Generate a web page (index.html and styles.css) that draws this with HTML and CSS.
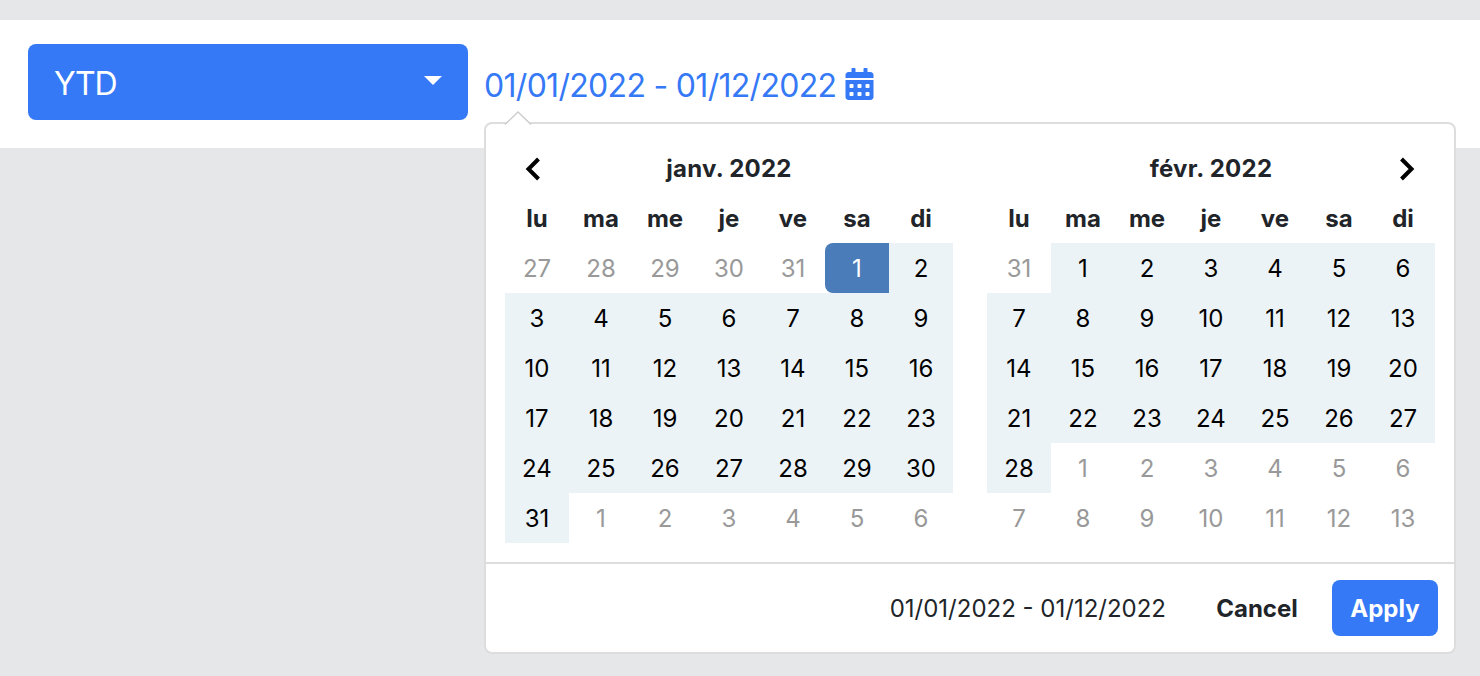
FILE: index.html
```html
<!DOCTYPE html>
<html lang="fr">
<head>
<meta charset="utf-8">
<title>Date range</title>
<link rel="stylesheet" href="styles.css">
</head>
<body>
<header class="toolbar">
  <button class="period"><span class="period-label">YTD</span><span class="caret"></span></button>
  <div class="range">
    <span class="range-text">01/01/2022 - 01/12/2022</span>
    <svg class="cal-icon" viewBox="0 0 448 512"><path fill="currentColor" fill-rule="evenodd" d="M0 464c0 26.500 21.500 48 48 48h352c26.500 0 48-21.500 48-48V192H0v272zm320-196c0-6.600 5.400-12 12-12h40c6.600 0 12 5.400 12 12v40c0 6.600-5.400 12-12 12h-40c-6.600 0-12-5.400-12-12v-40zm0 128c0-6.600 5.400-12 12-12h40c6.600 0 12 5.400 12 12v40c0 6.600-5.400 12-12 12h-40c-6.600 0-12-5.400-12-12v-40zM192 268c0-6.600 5.400-12 12-12h40c6.600 0 12 5.400 12 12v40c0 6.600-5.400 12-12 12h-40c-6.600 0-12-5.400-12-12v-40zm0 128c0-6.600 5.400-12 12-12h40c6.600 0 12 5.400 12 12v40c0 6.600-5.400 12-12 12h-40c-6.600 0-12-5.400-12-12v-40zM64 268c0-6.600 5.400-12 12-12h40c6.600 0 12 5.400 12 12v40c0 6.600-5.400 12-12 12H76c-6.600 0-12-5.400-12-12v-40zm0 128c0-6.600 5.400-12 12-12h40c6.600 0 12 5.400 12 12v40c0 6.600-5.400 12-12 12H76c-6.600 0-12-5.400-12-12v-40zM400 64h-48V16c0-8.800-7.200-16-16-16h-32c-8.800 0-16 7.200-16 16v48H160V16c0-8.800-7.200-16-16-16h-32c-8.800 0-16 7.200-16 16v48H48C21.500 64 0 85.500 0 112v48h448v-48c0-26.500-21.500-48-48-48z"/></svg>
  </div>
</header>

<section class="picker">
  <svg class="pointer" viewBox="0 0 28 14"><path fill="#fff" d="M0 14 L14 0.500 L28 14Z"/><path fill="none" stroke="#ccc" stroke-width="1.400" d="M1 13.500 L14 1 L27 13.500"/></svg>
  <div class="calendars">
    <div class="calendar">
      <div class="month">
        <svg class="arrow" viewBox="0 0 16 24"><path d="M13.500 2 L3.500 12 L13.500 22"/></svg>
        <span class="title">janv. 2022</span>
      </div>
      <div class="days">
        <b>lu</b><b>ma</b><b>me</b><b>je</b><b>ve</b><b>sa</b><b>di</b>
        <span>27</span><span>28</span><span>29</span><span>30</span><span>31</span><i class="start">1</i><i>2</i>
        <i>3</i><i>4</i><i>5</i><i>6</i><i>7</i><i>8</i><i>9</i>
        <i>10</i><i>11</i><i>12</i><i>13</i><i>14</i><i>15</i><i>16</i>
        <i>17</i><i>18</i><i>19</i><i>20</i><i>21</i><i>22</i><i>23</i>
        <i>24</i><i>25</i><i>26</i><i>27</i><i>28</i><i>29</i><i>30</i>
        <i>31</i><span>1</span><span>2</span><span>3</span><span>4</span><span>5</span><span>6</span>
      </div>
    </div>
    <div class="calendar">
      <div class="month">
        <span class="title">févr. 2022</span>
        <svg class="arrow next" viewBox="0 0 16 24"><path d="M2.500 2 L12.500 12 L2.500 22"/></svg>
      </div>
      <div class="days">
        <b>lu</b><b>ma</b><b>me</b><b>je</b><b>ve</b><b>sa</b><b>di</b>
        <span>31</span><i>1</i><i>2</i><i>3</i><i>4</i><i>5</i><i>6</i>
        <i>7</i><i>8</i><i>9</i><i>10</i><i>11</i><i>12</i><i>13</i>
        <i>14</i><i>15</i><i>16</i><i>17</i><i>18</i><i>19</i><i>20</i>
        <i>21</i><i>22</i><i>23</i><i>24</i><i>25</i><i>26</i><i>27</i>
        <i>28</i><span>1</span><span>2</span><span>3</span><span>4</span><span>5</span><span>6</span>
        <span>7</span><span>8</span><span>9</span><span>10</span><span>11</span><span>12</span><span>13</span>
      </div>
    </div>
  </div>
  <footer class="actions">
    <span class="selected">01/01/2022 - 01/12/2022</span>
    <button class="btn cancel">Cancel</button>
    <button class="btn apply">Apply</button>
  </footer>
</section>
</body>
</html>
```
FILE: styles.css
```css
* { box-sizing: border-box; }
body {
  margin: 0;
  padding-top: 20px;
  height: 676px;
  overflow: hidden;
  background: #e6e7e9;
  color: #212529;
  font-family: Inter, sans-serif;
}
button { border: 0; font-family: inherit; }
.toolbar {
  display: flex;
  align-items: flex-start;
  height: 128px;
  padding: 24px 28px;
  background: #fff;
}
.period {
  display: flex;
  align-items: center;
  justify-content: space-between;
  width: 440px;
  height: 76px;
  padding: 0 26px;
  border-radius: 8px;
  background: #3579f6;
  color: #fff;
}
.period-label {
  padding-top: 3px;
  font-size: 32px;
  line-height: 48px;
  letter-spacing: -1.3px;
}
.caret {
  margin-bottom: 4px;
  border: 9.500px solid transparent;
  border-top-color: #fff;
  border-bottom: 0;
}
.range {
  display: flex;
  align-items: center;
  height: 48px;
  margin: 17px 0 0 16px;
  color: #3579f6;
}
.range-text {
  width: 361px;
  font-size: 32px;
  letter-spacing: -0.7px;
  white-space: nowrap;
}
.cal-icon { width: 29px; height: 32px; margin-bottom: 2px; }
.picker {
  position: absolute;
  top: 122px;
  left: 484px;
  width: 972px;
  height: 532px;
  border: 2px solid #ddd;
  border-radius: 8px;
  background: #fff;
}
.pointer {
  position: absolute;
  top: -13px;
  left: 18px;
  width: 28px;
  height: 14px;
}
.calendars {
  display: flex;
  justify-content: space-between;
  height: 438px;
  padding: 19px 19px 0;
}
.calendar { width: 448px; }
.month {
  display: grid;
  grid-template-columns: 64px 320px 64px;
  align-items: center;
  justify-items: center;
  height: 50px;
}
.title {
  grid-column: 2;
  grid-row: 1;
  font-size: 24px;
  font-weight: 700;
  letter-spacing: 0.25px;
}
.arrow {
  grid-row: 1;
  width: 16px;
  height: 24px;
  margin: 2px 8px 0 0;
  fill: none;
  stroke: #000;
  stroke-width: 4;
}
.next { grid-column: 3; margin: 2px 0 0 8px; }
.days {
  display: grid;
  grid-template-columns: repeat(7, 64px);
  grid-auto-rows: 50px;
  font-size: 24px;
  line-height: 51px;
  text-align: center;
}
.days b { font-weight: 700; }
.days span { color: #999; }
.days i { background: #ecf3f7; color: #000; font-style: normal; }
.days .start {
  border-radius: 8px 0 0 8px;
  background: #497cb8;
  color: #fff;
}
.actions {
  display: flex;
  align-items: center;
  justify-content: flex-end;
  height: 90px;
  padding-right: 16px;
  border-top: 2px solid #ddd;
}
.selected { margin-right: 33px; font-size: 24px; white-space: nowrap; }
.btn {
  height: 56px;
  padding: 0;
  border-radius: 8px;
  font-size: 24px;
  font-weight: 700;
}
.cancel { width: 118px; margin-right: 16px; margin-left: -1px; background: none; color: #212529; }
.apply { width: 106px; background: #3579f6; color: #fff; }
```
